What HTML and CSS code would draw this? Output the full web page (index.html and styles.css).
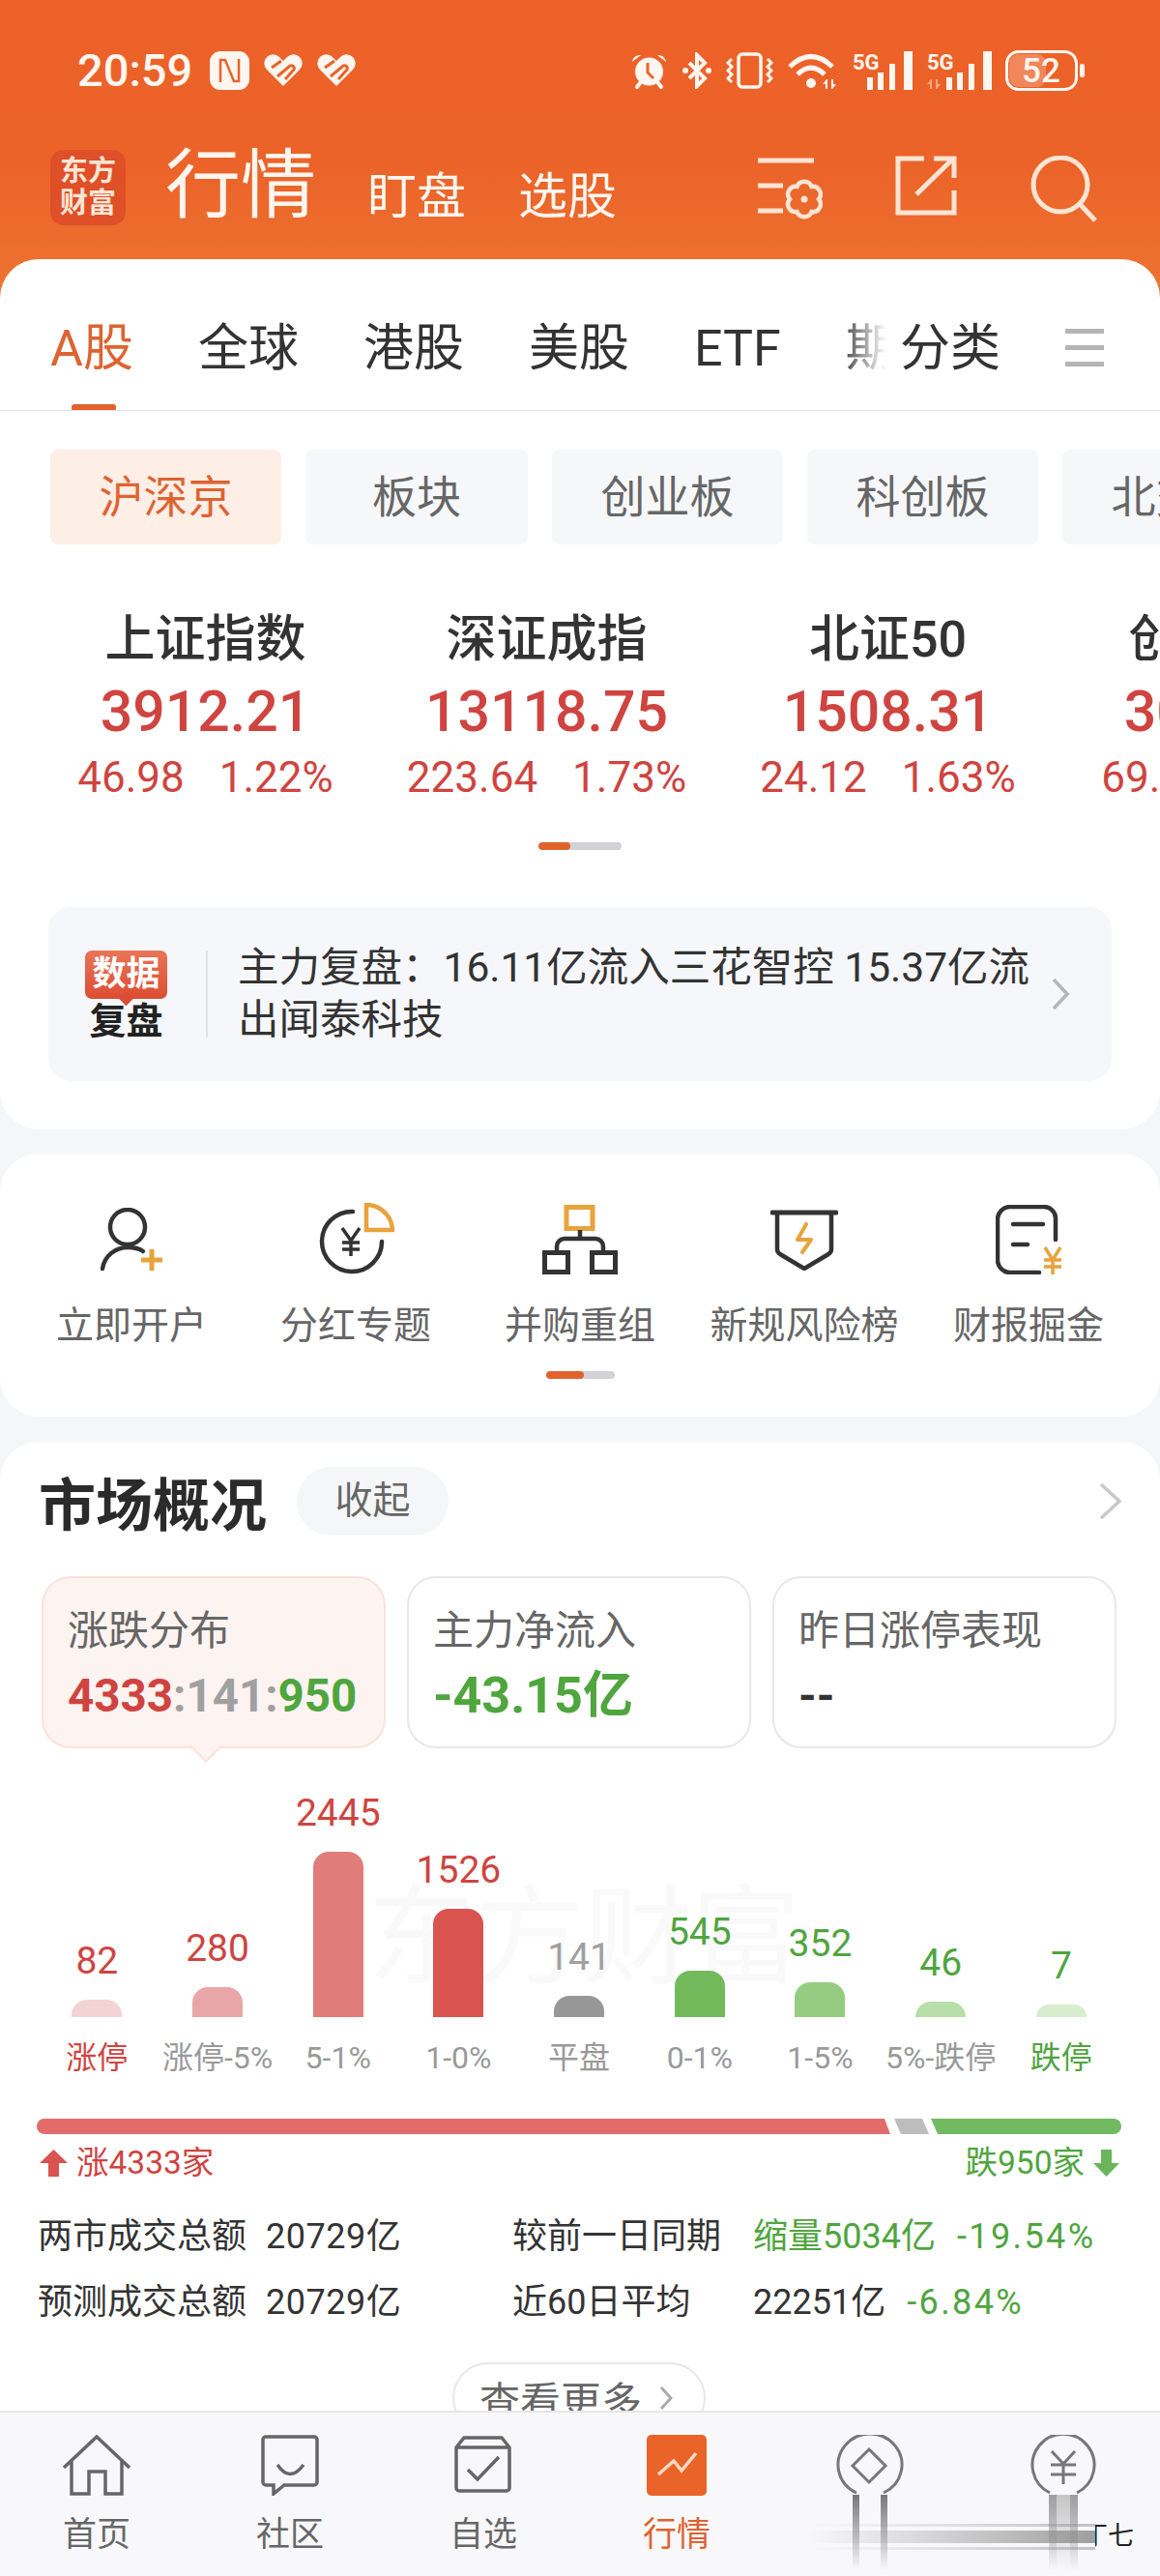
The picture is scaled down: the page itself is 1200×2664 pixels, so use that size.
FILE: index.html
```html
<!DOCTYPE html>
<html>
<head>
    <meta charset="utf-8">
    <link rel="stylesheet" href="styles.css">
</head>
<body>
<div class="page">
    <div class="page-head">
        <div class="status-bar">
            <span class="status-time">20:59</span>
            <svg class="status-nfc" width="41" height="40" viewBox="0 0 41 40"><rect width="41" height="40" rx="11" fill="#fff6f0"/><path d="M11 32V9h5l9 22h5V8" fill="none" stroke="#ea6329" stroke-width="2.5"/></svg>
            <svg class="status-heart" width="40" height="34" viewBox="0 0 40 34"><path d="M20 33L3 16A9 9 0 0 1 16 3l4 4 4-4a9 9 0 0 1 13 13z" fill="#fff6f0"/><path d="M8 14l10-7M14 23l13-11a3 3 0 0 1 4 4l-9 10" fill="none" stroke="#ea6329" stroke-width="3"/></svg>
            <svg class="status-heart" width="40" height="34" viewBox="0 0 40 34"><path d="M20 33L3 16A9 9 0 0 1 16 3l4 4 4-4a9 9 0 0 1 13 13z" fill="#fff6f0"/><path d="M8 14l10-7M14 23l13-11a3 3 0 0 1 4 4l-9 10" fill="none" stroke="#ea6329" stroke-width="3"/></svg>
            <div class="status-icons">
                <svg width="39" height="38" viewBox="0 0 39 38"><circle cx="19.5" cy="20" r="14.5" fill="#fff6f0"/><path d="M2 10a8 8 0 0 1 9-7zM37 10a8 8 0 0 0-9-7z" fill="#fff6f0"/><path d="M7 36l3-4M32 36l-3-4" stroke="#fff6f0" stroke-width="4" stroke-linecap="round"/><path d="M18 11v10l6 6" fill="none" stroke="#ea6329" stroke-width="3"/></svg>
                <svg width="32" height="38" viewBox="0 0 32 38"><path d="M8 11l16 16-8 8V3l8 8L8 27" fill="none" stroke="#fff6f0" stroke-width="4"/><circle cx="4" cy="19" r="3" fill="#fff6f0"/><circle cx="28" cy="19" r="3" fill="#fff6f0"/></svg>
                <svg width="49" height="38" viewBox="0 0 49 38"><rect x="13" y="2" width="23" height="34" rx="4" fill="none" stroke="#fff6f0" stroke-width="3.5"/><path d="M6 7L2 11l4 4-4 4 4 4-4 4 4 4M43 7l4 4-4 4 4 4-4 4 4 4-4 4" fill="none" stroke="#fff6f0" stroke-width="3"/></svg>
                <svg width="54" height="38" viewBox="0 0 54 38"><path d="M3 15Q25-6 47 15M11 23Q25 9 39 23" fill="none" stroke="#fff6f0" stroke-width="5"/><circle cx="25" cy="32" r="5" fill="#fff6f0"/><path d="M41 28l-4 5h3v5h2v-10zM47 38l4-5h-3v-5h-2v10z" fill="#fff6f0"/></svg>
                <svg width="63" height="40" viewBox="0 0 63 40"><text class="status-5g" x="0" y="19">5G</text><path d="M15 27h6v13h-6zM26 22h6v18h-6zM38 13h6v27h-6zM53 0h9v40h-9z" fill="#fff6f0"/></svg>
                <svg width="67" height="40" viewBox="0 0 67 40"><text class="status-5g" x="0" y="19">5G</text><path d="M4 29l-4 5h3v5h2V29zM10 39l4-5h-3v-5H9v10z" fill="#f6a57f"/><path d="M20 27h6v13h-6zM31 22h6v18h-6zM43 13h6v27h-6zM58 0h9v40h-9z" fill="#fff6f0"/></svg>
                <svg width="83" height="42" viewBox="0 0 83 42"><rect x="4" y="4" width="38" height="34" rx="9" fill="#fff6f0" opacity=".25"/><rect x="1.5" y="1.5" width="72" height="39" rx="12" fill="none" stroke="#fff6f0" stroke-width="3"/><text class="status-level" x="37" y="33" text-anchor="middle">52</text><rect x="77" y="14" width="5" height="14" rx="2.5" fill="#fff6f0"/></svg>
            </div>
        </div>
        <div class="title-bar">
            <div class="brand-logo"><span>东方</span><span>财富</span></div>
            <div class="title-main">行情</div>
            <div class="title-sub title-sub-first">盯盘</div>
            <div class="title-sub">选股</div>
            <div class="title-actions">
                <svg width="68" height="68" viewBox="0 0 68 68"><path d="M1 5h58M1 31h26M1 57h26" stroke="#fde4d4" stroke-width="5"/><g transform="translate(49 45)"><path d="M15 0A8 8 0 0 1 7.5 13 8 8 0 0 1-7.5 13 8 8 0 0 1-15 0 8 8 0 0 1-7.5-13 8 8 0 0 1 7.5-13 8 8 0 0 1 15 0z" fill="none" stroke="#fde4d4" stroke-width="4.5"/><circle r="3.5" fill="#fde4d4"/></g></svg>
                <svg width="64" height="62" viewBox="0 0 64 62"><path d="M30 3H3v56h58V36M22 40L60 3M40 3h21v20" fill="none" stroke="#fde4d4" stroke-width="5"/></svg>
                <svg width="70" height="70" viewBox="0 0 70 70"><circle cx="32" cy="30" r="28" fill="none" stroke="#fde4d4" stroke-width="5"/><path d="M52 50l16 17" stroke="#fde4d4" stroke-width="5"/></svg>
            </div>
        </div>
    </div>

    <div class="card card-quotes">
        <div class="market-tabs">
            <div class="tab-scroll">
                <div class="tab tab-active">A股</div>
                <div class="tab">全球</div>
                <div class="tab">港股</div>
                <div class="tab">美股</div>
                <div class="tab">ETF</div>
                <div class="tab">期货</div>
            </div>
            <div class="tab tab-fixed">分类</div>
            <div class="tab-menu"><i></i><i></i><i></i></div>
        </div>

        <div class="chips">
            <div class="chip chip-active">沪深京</div>
            <div class="chip chip-wide">板块</div>
            <div class="chip">创业板</div>
            <div class="chip">科创板</div>
            <div class="chip">北交所</div>
        </div>

        <div class="index-row">
            <div class="index-cell">
                <div class="index-name">上证指数</div>
                <div class="index-value">3912.21</div>
                <div class="index-change"><span>46.98</span><span>1.22%</span></div>
            </div>
            <div class="index-cell">
                <div class="index-name">深证成指</div>
                <div class="index-value">13118.75</div>
                <div class="index-change"><span>223.64</span><span>1.73%</span></div>
            </div>
            <div class="index-cell">
                <div class="index-name">北证50</div>
                <div class="index-value">1508.31</div>
                <div class="index-change"><span>24.12</span><span>1.63%</span></div>
            </div>
            <div class="index-cell">
                <div class="index-name">创业板指</div>
                <div class="index-value">3012.44</div>
                <div class="index-change"><span>69.12</span><span>2.35%</span></div>
            </div>
        </div>

        <div class="pager pager-index"><i></i></div>

        <div class="review-banner">
            <div class="review-badge">
                <div class="review-badge-top">数据</div>
                <div class="review-badge-bottom">复盘</div>
            </div>
            <div class="review-text">主力复盘：16.11亿流入三花智控 15.37亿流出闻泰科技</div>
            <svg class="chevron" width="18" height="34" viewBox="0 0 18 34"><path d="M2 2l14 15L2 32" fill="none" stroke="#b5b5b5" stroke-width="3.5"/></svg>
        </div>
    </div>

    <div class="card card-shortcuts">
        <div class="shortcut-grid">
            <div class="shortcut">
                <div class="shortcut-icon">
                    <svg width="66" height="66" viewBox="0 0 66 66"><circle cx="29" cy="20" r="18" fill="none" stroke="#333" stroke-width="4.5"/><path d="M3 63C5 50 16 41 29 41c6 0 12 1 16 4" fill="none" stroke="#333" stroke-width="4.5" stroke-linecap="round"/><path d="M43 54h22M54 43v22" stroke="#e8a33d" stroke-width="5"/></svg>
                </div>
                <div class="shortcut-label">立即开户</div>
            </div>
            <div class="shortcut">
                <div class="shortcut-icon">
                    <svg width="80" height="76" viewBox="0 0 80 76"><path d="M37 9A31 31 0 1 0 67 40" fill="none" stroke="#333" stroke-width="4.5" stroke-linecap="round"/><path d="M51 2v26h27A27 27 0 0 0 51 2z" fill="none" stroke="#e8a33d" stroke-width="4.5"/><path d="M26 26l9 13 9-13M35 39v16M26 41h18M26 48h18" fill="none" stroke="#333" stroke-width="3.5"/></svg>
                </div>
                <div class="shortcut-label">分红专题</div>
            </div>
            <div class="shortcut">
                <div class="shortcut-icon">
                    <svg width="78" height="72" viewBox="0 0 78 72"><rect x="25" y="2.5" width="27" height="22" fill="none" stroke="#e8a33d" stroke-width="5"/><path d="M39 26v9M15 47v-4a8 8 0 0 1 8-8h32a8 8 0 0 1 8 8v4" fill="none" stroke="#333" stroke-width="4.5"/><rect x="2.5" y="49.5" width="24" height="20" fill="none" stroke="#333" stroke-width="5"/><rect x="51.5" y="49.5" width="24" height="20" fill="none" stroke="#333" stroke-width="5"/></svg>
                </div>
                <div class="shortcut-label">并购重组</div>
            </div>
            <div class="shortcut">
                <div class="shortcut-icon">
                    <svg width="70" height="63" viewBox="0 0 70 63"><path d="M2 3h66" stroke="#333" stroke-width="5" stroke-linecap="round"/><path d="M7 3v38q0 3 3 5l25 15 25-15q3-2 3-5V3" fill="none" stroke="#333" stroke-width="4.5"/><path d="M37 15l-9 16h14l-9 13" fill="none" stroke="#e8a33d" stroke-width="4" stroke-linecap="round" stroke-linejoin="round"/></svg>
                </div>
                <div class="shortcut-label">新规风险榜</div>
            </div>
            <div class="shortcut">
                <div class="shortcut-icon">
                    <svg width="69" height="72" viewBox="0 0 69 72"><path d="M62 36V14A12 12 0 0 0 50 2H15A13 13 0 0 0 2 15v42a13 13 0 0 0 13 13h30" fill="none" stroke="#333" stroke-width="4.5" stroke-linecap="round"/><path d="M18 20h31M18 41h15" stroke="#333" stroke-width="4.5" stroke-linecap="round"/><path d="M51 44l8 13 8-13M59 57v15M50 57h18M50 64h18" fill="none" stroke="#e8a33d" stroke-width="3.5"/></svg>
                </div>
                <div class="shortcut-label">财报掘金</div>
            </div>
        </div>
        <div class="pager pager-shortcut"><i></i></div>
    </div>

    <div class="card card-market">
        <div class="market-head">
            <div class="market-title">市场概况</div>
            <div class="market-fold">收起</div>
            <svg class="market-more" width="23" height="39" viewBox="0 0 23 39"><path d="M2 2l19 17.500L2 37" fill="none" stroke="#c8c8c8" stroke-width="3.5"/></svg>
        </div>

        <div class="stat-tabs">
            <div class="stat-tab stat-tab-active">
                <div class="stat-label">涨跌分布</div>
                <div class="stat-value"><span class="text-red">4333</span><span class="text-gray">:141:</span><span class="text-green">950</span></div>
            </div>
            <div class="stat-tab">
                <div class="stat-label">主力净流入</div>
                <div class="stat-value stat-value-large text-green">-43.15亿</div>
            </div>
            <div class="stat-tab">
                <div class="stat-label">昨日涨停表现</div>
                <div class="stat-value text-dark">--</div>
            </div>
        </div>

        <div class="chart">
            <div class="chart-mark">东方财富</div>
            <div class="chart-col">
                <div class="chart-num text-red">82</div>
                <div class="chart-bar bar-1" style="height: 18px"></div>
                <div class="chart-cat text-red">涨停</div>
            </div>
            <div class="chart-col">
                <div class="chart-num text-red">280</div>
                <div class="chart-bar bar-2" style="height: 31px"></div>
                <div class="chart-cat">涨停-5%</div>
            </div>
            <div class="chart-col">
                <div class="chart-num text-red">2445</div>
                <div class="chart-bar bar-3" style="height: 171px"></div>
                <div class="chart-cat">5-1%</div>
            </div>
            <div class="chart-col">
                <div class="chart-num text-red">1526</div>
                <div class="chart-bar bar-4" style="height: 112px"></div>
                <div class="chart-cat">1-0%</div>
            </div>
            <div class="chart-col">
                <div class="chart-num text-gray">141</div>
                <div class="chart-bar bar-5" style="height: 22px"></div>
                <div class="chart-cat">平盘</div>
            </div>
            <div class="chart-col">
                <div class="chart-num text-green">545</div>
                <div class="chart-bar bar-6" style="height: 48px"></div>
                <div class="chart-cat">0-1%</div>
            </div>
            <div class="chart-col">
                <div class="chart-num text-green">352</div>
                <div class="chart-bar bar-7" style="height: 36px"></div>
                <div class="chart-cat">1-5%</div>
            </div>
            <div class="chart-col">
                <div class="chart-num text-green">46</div>
                <div class="chart-bar bar-8" style="height: 16px"></div>
                <div class="chart-cat">5%-跌停</div>
            </div>
            <div class="chart-col">
                <div class="chart-num text-green">7</div>
                <div class="chart-bar bar-9" style="height: 13px"></div>
                <div class="chart-cat text-green">跌停</div>
            </div>
        </div>

        <svg class="ratio-bar" width="1122" height="16" viewBox="0 0 1122 16"><path d="M8 0H877l6 16H8a8 8 0 0 1 0-16z" fill="#e36c6a"/><path d="M887 0h29l7 16h-29z" fill="#bdbdbd"/><path d="M925 0h189a8 8 0 0 1 0 16H932z" fill="#72ba62"/></svg>

        <div class="ratio-legend">
            <div class="legend-up text-red">
                <svg width="29" height="28" viewBox="0 0 29 28"><path d="M14.500 0L29 14H20V28H9V14H0z" fill="#d9534f"/></svg>
                <span>涨4333家</span>
            </div>
            <div class="legend-down text-green">
                <span>跌950家</span>
                <svg width="27" height="28" viewBox="0 0 27 28"><path d="M13.500 28L0 14H8V0H19V14H27z" fill="#6bb55a"/></svg>
            </div>
        </div>

        <div class="turnover">
            <div class="turnover-row">
                <span class="turnover-name">两市成交总额</span>
                <span class="turnover-value">20729亿</span>
                <span class="turnover-name turnover-name-right">较前一日同期</span>
                <span class="text-green">缩量5034亿</span>
                <span class="text-green">-19.54%</span>
            </div>
            <div class="turnover-row">
                <span class="turnover-name">预测成交总额</span>
                <span class="turnover-value">20729亿</span>
                <span class="turnover-name turnover-name-right">近60日平均</span>
                <span>22251亿</span>
                <span class="text-green">-6.84%</span>
            </div>
        </div>

        <div class="more-pill">查看更多<svg width="14" height="26" viewBox="0 0 14 26"><path d="M2 2l10 11L2 24" fill="none" stroke="#aaa" stroke-width="3"/></svg></div>
    </div>

    <div class="bottom-nav">
        <div class="nav-item">
            <svg width="70" height="63" viewBox="0 0 70 63"><path d="M1 34L35 2l34 32M9 26v35h18V38h17v23h17V26" fill="none" stroke="#666" stroke-width="3.5"/></svg>
            <div class="nav-label">首页</div>
        </div>
        <div class="nav-item">
            <svg width="60" height="63" viewBox="0 0 60 63"><path d="M5 2h50a3 3 0 0 1 3 3v44a3 3 0 0 1-3 3H24l-11 9v-9H5a3 3 0 0 1-3-3V5a3 3 0 0 1 3-3z" fill="none" stroke="#666" stroke-width="3.5"/><path d="M17 31q13 19 27 0" fill="none" stroke="#666" stroke-width="3.5"/></svg>
            <div class="nav-label">社区</div>
        </div>
        <div class="nav-item">
            <svg width="60" height="63" viewBox="0 0 60 63"><path d="M2 13L10 3h39l8 10v42a3 3 0 0 1-3 3H5a3 3 0 0 1-3-3zM2 13h55" fill="none" stroke="#666" stroke-width="3.5"/><path d="M14 36l10 10 22-23" fill="none" stroke="#666" stroke-width="3.5"/></svg>
            <div class="nav-label">自选</div>
        </div>
        <div class="nav-item nav-item-active">
            <svg width="62" height="63" viewBox="0 0 62 63"><rect width="62" height="63" rx="5" fill="#ea6329"/><path d="M12 41l16-14 8 10 15-18" fill="none" stroke="#fbd9c2" stroke-width="3.5"/></svg>
            <div class="nav-label">行情</div>
        </div>
        <div class="nav-item">
            <svg width="80" height="146" viewBox="0 0 80 146">
                <defs>
                    <linearGradient id="stem-fade" x1="0" y1="0" x2="0" y2="1"><stop offset="0" stop-color="#777"/><stop offset="1" stop-color="#777" stop-opacity="0"/></linearGradient>
                </defs>
                <path d="M26 60A33 32 0 1 1 54 60" fill="none" stroke="#777" stroke-width="3"/>
                <path d="M39 15l17 17-17 17-17-17z" fill="none" stroke="#777" stroke-width="3"/>
                <rect x="22" y="62" width="7" height="78" fill="url(#stem-fade)"/>
                <rect x="51" y="62" width="7" height="78" fill="url(#stem-fade)"/>
            </svg>
        </div>
        <div class="nav-item">
            <svg width="80" height="146" viewBox="0 0 80 146">
                <path d="M26 60A32 32 0 1 1 54 60" fill="none" stroke="#777" stroke-width="3"/>
                <path d="M28 17l12 13 12-13M40 30v21M27 31h26M27 41h26" fill="none" stroke="#777" stroke-width="3"/>
                <rect x="25" y="62" width="30" height="78" fill="url(#stem-fade)" opacity=".4"/>
                <rect x="25" y="62" width="8" height="78" fill="url(#stem-fade)" opacity=".5"/>
                <rect x="47" y="62" width="8" height="78" fill="url(#stem-fade)" opacity=".5"/>
            </svg>
        </div>
        <svg class="nav-streak" width="298" height="28" viewBox="0 0 298 28">
            <defs>
                <linearGradient id="streak-fade" x1="0" y1="0" x2="1" y2="0"><stop offset="0" stop-color="#999" stop-opacity="0"/><stop offset="1" stop-color="#888" stop-opacity=".8"/></linearGradient>
            </defs>
            <rect y="0" width="298" height="3" fill="url(#streak-fade)" opacity=".6"/>
            <rect y="7" width="298" height="13" fill="url(#streak-fade)"/>
            <rect y="24" width="298" height="3" fill="url(#streak-fade)" opacity=".6"/>
        </svg>
        <div class="nav-signature"><span>丁七</span></div>
    </div>
</div>
</body>
</html>
```

FILE: styles.css
```css
html, body {
    margin: 0;
    padding: 0;
}

body {
    font-family: Roboto, "Noto Sans CJK SC", sans-serif;
    background-color: #f5f6f8;
    color: #333;
}

svg {
    display: block;
}

.page {
    position: relative;
    width: 1200px;
    height: 2664px;
    overflow: hidden;
}

/* orange top area */
.page-head {
    height: 308px;
    margin-bottom: -40px;
    background: linear-gradient(180deg, #ec6128 0%, #eb6329 55%, #ee7431 100%);
    color: #fff6f0;
}

.status-bar {
    display: flex;
    align-items: center;
    height: 46px;
    padding: 50px 77px 0 80px;
}

.status-time {
    width: 137px;
    font-size: 47px;
    font-weight: 500;
    line-height: 46px;
}

.status-heart {
    margin-left: 15px;
}

.status-icons {
    display: flex;
    align-items: center;
    gap: 14px;
    margin-left: auto;
}

.status-5g {
    font-size: 22px;
    font-weight: 700;
    fill: #fff6f0;
}

.status-level {
    font-size: 35px;
    font-weight: 500;
    fill: #fff6f0;
}

.title-bar {
    display: flex;
    align-items: flex-start;
    height: 78px;
    margin-top: 59px;
    padding: 0 52px;
}

.brand-logo {
    display: flex;
    flex-direction: column;
    align-items: center;
    justify-content: center;
    width: 78px;
    height: 78px;
    border-radius: 14px;
    background-color: #df4f28;
    color: #fde6d6;
    font-size: 29px;
    font-weight: 700;
    line-height: 33px;
}

.title-main {
    margin-left: 41px;
    font-size: 78px;
    line-height: 76px;
}

.title-sub {
    margin-left: 54px;
    padding-top: 23px;
    font-size: 51px;
    line-height: 52px;
}

.title-sub-first {
    margin-left: 53px;
}

.title-actions {
    display: flex;
    align-items: flex-start;
    gap: 75px;
    margin: 6px 0 0 145px;
}

/* white cards */
.card {
    background-color: #fff;
    border-radius: 40px;
}

.card-quotes {
    padding-bottom: 50px;
}

.market-tabs {
    display: flex;
    height: 157px;
    padding-left: 52px;
    border-bottom: 1px solid #e4e4e4;
    box-sizing: border-box;
    font-size: 52px;
}

.tab-scroll {
    position: relative;
    display: flex;
    gap: 67px;
    width: 865px;
    overflow: hidden;
}

.tab-scroll::after {
    content: "";
    position: absolute;
    top: 0;
    right: 0;
    bottom: 0;
    width: 50px;
    background: linear-gradient(90deg, rgba(255, 255, 255, 0), #fff);
}

.tab {
    position: relative;
    flex: none;
    padding-top: 63px;
    line-height: 60px;
    height: 94px;
    color: #333;
}

.tab-active {
    color: #dd6431;
}

.tab-active::after {
    content: "";
    position: absolute;
    left: 22px;
    bottom: 0;
    width: 46px;
    height: 7px;
    border-radius: 3px;
    background-color: #e2622d;
}

.tab-fixed {
    margin-left: 14px;
}

.tab-menu {
    display: flex;
    flex-direction: column;
    gap: 12px;
    margin: 72px 0 0 67px;
}

.tab-menu i {
    display: block;
    width: 40px;
    height: 5px;
    background-color: #b5b5b5;
}

.chips {
    display: flex;
    gap: 25px;
    margin-top: 40px;
    padding-left: 52px;
    overflow: hidden;
}

.chip {
    flex: none;
    height: 98px;
    padding: 0 50.5px;
    border-radius: 8px;
    background-color: #f6f7f9;
    color: #666;
    font-size: 46px;
    line-height: 98px;
}

.chip-wide {
    padding: 0 69px;
}

.chip-active {
    background-color: #fdeee6;
    color: #dd6431;
}

.index-row {
    display: flex;
    margin-top: 69px;
    padding-left: 36px;
    overflow: hidden;
}

.index-cell {
    flex: none;
    width: 353px;
    text-align: center;
}

.index-name {
    font-size: 52px;
    font-weight: 500;
    line-height: 60px;
    color: #333;
}

.index-value {
    margin-top: 9px;
    font-size: 59px;
    font-weight: 500;
    line-height: 70px;
    color: #cf4440;
}

.index-change {
    display: flex;
    justify-content: center;
    gap: 36px;
    margin-top: 8px;
    font-size: 44px;
    line-height: 50px;
    color: #cf4440;
    white-space: nowrap;
}

.pager {
    height: 8px;
    margin: 0 auto;
    border-radius: 4px;
    background-color: #d2d2d6;
    overflow: hidden;
}

.pager i {
    display: block;
    height: 8px;
    border-radius: 4px;
    background-color: #e2622d;
}

.pager-index {
    width: 86px;
    margin-top: 42px;
}

.pager-index i {
    width: 33px;
}

.review-banner {
    display: flex;
    align-items: center;
    height: 180px;
    margin: 59px 50px 0;
    padding-left: 38px;
    border-radius: 24px;
    background-color: #f6f7fa;
}

.review-badge {
    flex: none;
    width: 85px;
    padding-right: 40px;
    border-right: 2px solid #e2e2e2;
    text-align: center;
}

.review-badge-top {
    position: relative;
    height: 50px;
    border-radius: 7px;
    background: linear-gradient(180deg, #e87558, #dc4d33);
    color: #fff;
    font-size: 35px;
    font-weight: 700;
    line-height: 50px;
}

.review-badge-top::after {
    content: "";
    position: absolute;
    left: 37px;
    bottom: -5px;
    width: 11px;
    height: 11px;
    background-color: #dc4d33;
    transform: rotate(45deg);
}

.review-badge-bottom {
    margin-top: 6px;
    font-size: 38px;
    font-weight: 700;
    line-height: 34px;
    color: #222;
}

.review-text {
    width: 820px;
    margin-left: 31px;
    font-size: 42.500px;
    line-height: 54px;
    color: #333;
}

.chevron {
    margin-left: 22px;
}

.card-shortcuts {
    margin-top: 25px;
    padding: 50px 0 39px;
}

.shortcut-grid {
    display: grid;
    grid-template-columns: repeat(5, 232px);
    padding-left: 20px;
}

.shortcut {
    display: flex;
    flex-direction: column;
    align-items: center;
}

.shortcut-icon {
    display: flex;
    align-items: center;
    justify-content: center;
    height: 78px;
}

.shortcut-label {
    margin-top: 25px;
    font-size: 39px;
    line-height: 50px;
    color: #666;
    white-space: nowrap;
}

.pager-shortcut {
    width: 71px;
    margin-top: 22px;
}

.pager-shortcut i {
    width: 39px;
}

.card-market {
    height: 1200px;
    margin-top: 26px;
    padding-top: 26px;
}

.market-head {
    display: flex;
    align-items: center;
    height: 71px;
    padding: 0 40px 0 40px;
}

.market-title {
    font-size: 59px;
    font-weight: 700;
    color: #2b2b2b;
}

.market-fold {
    width: 157px;
    margin-left: 31px;
    border-radius: 36px;
    background-color: #f5f6f8;
    font-size: 39px;
    line-height: 71px;
    text-align: center;
    color: #666;
}

.market-more {
    margin-left: auto;
}

.stat-tabs {
    display: grid;
    grid-template-columns: repeat(3, 356px);
    gap: 22px;
    margin-top: 42px;
    padding-left: 43px;
}

.stat-tab {
    position: relative;
    box-sizing: border-box;
    height: 178px;
    padding: 30px 0 0 25px;
    border: 2px solid #e8e8e8;
    border-radius: 30px;
}

.stat-tab-active {
    border-color: #fae3db;
    background-color: #fdf3f0;
}

.stat-tab-active::after {
    content: "";
    position: absolute;
    left: 156px;
    bottom: -12px;
    width: 22px;
    height: 22px;
    border-right: 2px solid #fae3db;
    border-bottom: 2px solid #fae3db;
    background-color: #fdf3f0;
    transform: rotate(45deg);
}

.stat-label {
    font-size: 42px;
    line-height: 50px;
    color: #666;
}

.stat-value {
    margin-top: 17px;
    font-size: 47.5px;
    font-weight: 700;
    line-height: 50px;
    white-space: nowrap;
}

.stat-value-large {
    font-size: 52px;
}

.chart {
    position: relative;
    display: grid;
    grid-template-columns: repeat(9, 124.7px);
    align-items: end;
    margin-top: 44px;
    padding-left: 38px;
    height: 294px;
}

.chart-mark {
    position: absolute;
    left: 380px;
    top: 88px;
    font-size: 112px;
    line-height: 130px;
    color: #f9f9f9;
    white-space: nowrap;
}

.chart-col {
    position: relative;
    display: flex;
    flex-direction: column;
    align-items: center;
}

.chart-num {
    margin-bottom: 17px;
    font-size: 39px;
    line-height: 46px;
}

.chart-bar {
    width: 52px;
    border-radius: 16px 16px 0 0;
}

.chart-cat {
    margin-top: 24px;
    font-size: 32px;
    line-height: 36px;
    color: #999;
    white-space: nowrap;
}

.bar-1 { background-color: #f3d3d3; }
.bar-2 { background-color: #e9a6a8; }
.bar-3 { background-color: #e07c79; }
.bar-4 { background-color: #d9534f; }
.bar-5 { background-color: #979797; }
.bar-6 { background-color: #72ba5c; }
.bar-7 { background-color: #96cc82; }
.bar-8 { background-color: #b8deaa; }
.bar-9 { background-color: #d8edd0; }

.ratio-bar {
    margin: 45px 0 0 38px;
}

.ratio-legend {
    display: flex;
    justify-content: space-between;
    height: 40px;
    margin-top: 10px;
    padding: 0 42px 0 41px;
    font-size: 33.5px;
    line-height: 40px;
}

.legend-up,
.legend-down {
    display: flex;
    align-items: center;
    gap: 9px;
}

.turnover {
    display: flex;
    flex-direction: column;
    gap: 18px;
    margin-top: 31px;
    padding-left: 39px;
}

.turnover-row {
    display: flex;
    font-size: 36px;
    line-height: 50px;
    color: #333;
    white-space: nowrap;
}

.turnover-row span:last-child {
    margin-left: 22px;
    letter-spacing: 2.4px;
}

.turnover-name {
    width: 236px;
}

.turnover-name-right {
    width: 249px;
}

.turnover-value {
    width: 255px;
    letter-spacing: 0.5px;
}

.more-pill {
    display: flex;
    align-items: center;
    justify-content: center;
    gap: 18px;
    box-sizing: border-box;
    width: 262px;
    height: 74px;
    margin: 37px 0 0 468px;
    padding-right: 6px;
    border: 2px solid #e8e8e8;
    border-radius: 37px;
    font-size: 42px;
    color: #666;
}

/* tab bar sits over the scrolling content */
.bottom-nav {
    position: absolute;
    left: 0;
    right: 0;
    bottom: 0;
    display: grid;
    grid-template-columns: repeat(6, 200px);
    height: 171px;
    box-sizing: border-box;
    padding-top: 23px;
    border-top: 2px solid #e6e6e6;
    background-color: #f8f8fa;
}

.nav-item {
    display: flex;
    flex-direction: column;
    align-items: center;
}

.nav-label {
    margin-top: 19px;
    font-size: 35px;
    line-height: 44px;
    color: #666;
}

.nav-item-active .nav-label {
    color: #dd6431;
}

.nav-streak {
    position: absolute;
    left: 835px;
    top: 115px;
}

.nav-signature {
    position: absolute;
    left: 1133px;
    top: 113px;
    display: flex;
    justify-content: flex-end;
    width: 40px;
    overflow: hidden;
    font-size: 27px;
    line-height: 30px;
    color: #222;
    white-space: nowrap;
}

.nav-signature span {
    flex: none;
}

/* colour helpers, kept last so they win over the block rules above */
.text-red {
    color: #cf4440;
}

.text-green {
    color: #4fa53e;
}

.text-gray {
    color: #a0a0a0;
}

.text-dark {
    color: #333;
}
```
